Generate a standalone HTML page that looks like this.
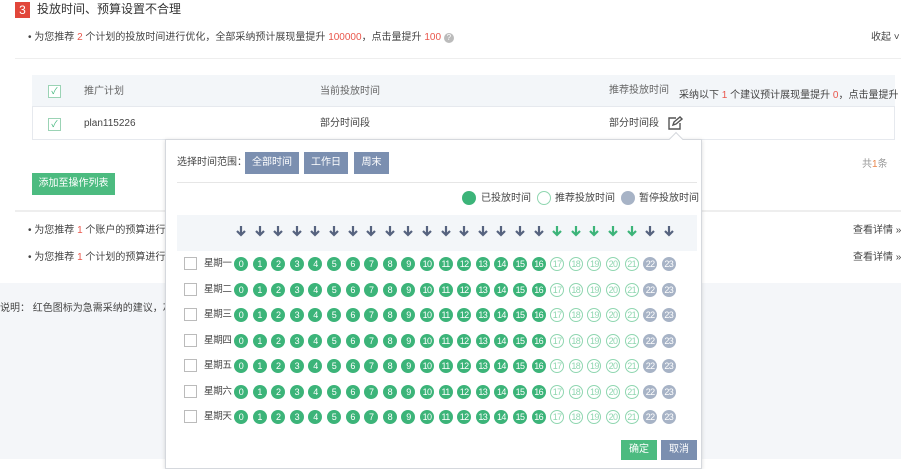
<!DOCTYPE html>
<html><head><meta charset="utf-8"><style>
*{margin:0;padding:0;box-sizing:border-box}
body{width:901px;height:459px;overflow:hidden;background:#fff;font-family:"Liberation Sans","Noto Sans CJK SC",sans-serif;font-size:10px;line-height:13px;color:#444;position:relative}
.a{position:absolute;white-space:nowrap}
.r{color:#e9564b}
.cb{position:absolute;width:13px;height:13px;border:1px solid #9bd3b5;background:#fff;color:#3fb57a;font-size:9px;line-height:11px;text-align:center}
.cb2{position:absolute;width:13px;height:13px;border:1px solid #bbb;background:#fff}
.btn{position:absolute;background:#7b8fb0;color:#fff;text-align:center;line-height:22px;font-size:10px}
.c{position:absolute;width:14px;height:14px;border-radius:50%;font-size:9px;line-height:14px;text-align:center;color:#fff;letter-spacing:-0.6px}
.g{background:#3cb479}
.h{background:#fff;border:1px solid #8fd6b0;color:#8fd6b0;line-height:12px}
.p{background:#a7b3c6}
.ar{position:absolute}
</style></head><body>
<div class="a" style="left:0;top:283px;width:901px;height:176px;background:#f4f6f9"></div>
<div class="a" style="left:15px;top:2px;width:15px;height:16px;background:#e1463a;color:#fff;font-size:12px;text-align:center;line-height:16px">3</div>
<div class="a" style="left:37px;top:1px;font-size:12px;color:#333;line-height:16px">投放时间、预算设置不合理</div>
<div class="a" style="left:28px;top:31px;font-size:10px">• 为您推荐 <span class="r">2</span> 个计划的投放时间进行优化，全部采纳预计展现量提升 <span class="r">100000</span>，点击量提升 <span class="r">100</span> <span style="display:inline-block;width:10px;height:10px;border-radius:50%;background:#bbb;color:#fff;font-size:8px;line-height:10px;text-align:center">?</span></div>
<div class="a" style="left:871px;top:31px;font-size:10px">收起 ˅</div>
<div class="a" style="left:15px;top:58px;width:886px;height:154px;border-top:1px solid #eee;border-bottom:2px solid #eee"></div>
<div class="a" style="left:32px;top:75px;width:863px;height:65px;border:1px solid #e6e9ee"></div>
<div class="a" style="left:32px;top:75px;width:863px;height:32px;background:#f3f6f9;border-bottom:1px solid #e6e9ee"></div>
<div class="cb" style="left:48px;top:85px">✓</div>
<div class="cb" style="left:48px;top:118px">✓</div>
<div class="a" style="left:84px;top:85px;color:#666">推广计划</div>
<div class="a" style="left:320px;top:85px;color:#666">当前投放时间</div>
<div class="a" style="left:609px;top:84px;color:#666">推荐投放时间</div>
<div class="a" style="left:679px;top:89px">采纳以下 <span class="r">1</span> 个建议预计展现量提升 <span class="r">0</span>，点击量提升 <span class="r">0</span></div>
<div class="a" style="left:84px;top:117px">plan115226</div>
<div class="a" style="left:320px;top:117px">部分时间段</div>
<div class="a" style="left:609px;top:117px">部分时间段</div>
<svg class="a" style="left:667px;top:116px" width="16" height="14" viewBox="0 0 16 14"><path d="M9 2H2v11h11V7" fill="none" stroke="#555" stroke-width="1.4"/><path d="M6 9l1-3 6-5 2 2-6 5z" fill="none" stroke="#555" stroke-width="1.4"/></svg>
<div class="btn" style="left:32px;top:173px;width:83px;background:#4cbb80">添加至操作列表</div>
<div class="a" style="left:862px;top:158px;color:#999">共<span style="color:#e9864b">1</span>条</div>
<div class="a" style="left:28px;top:224px">• 为您推荐 <span class="r">1</span> 个账户的预算进行优化</div>
<div class="a" style="left:28px;top:251px">• 为您推荐 <span class="r">1</span> 个计划的预算进行优化</div>
<div class="a" style="left:853px;top:224px">查看详情 »</div>
<div class="a" style="left:853px;top:251px">查看详情 »</div>
<div class="a" style="left:0;top:302px">说明： 红色图标为急需采纳的建议，灰色</div>

<div class="a" style="left:165px;top:139px;width:537px;height:330px;background:#fff;border:1px solid #d5d8dd;box-shadow:0 1px 4px rgba(0,0,0,.15)"></div>
<div class="a" style="left:671px;top:134px;width:10px;height:10px;background:#fff;border-left:1px solid #d5d8dd;border-top:1px solid #d5d8dd;transform:rotate(45deg)"></div>
<div class="a" style="left:177px;top:156px">选择时间范围：</div>
<div class="btn" style="left:245px;top:152px;width:54px">全部时间</div>
<div class="btn" style="left:304px;top:152px;width:44px">工作日</div>
<div class="btn" style="left:354px;top:152px;width:35px">周末</div>
<div class="a" style="left:177px;top:182px;width:520px;height:1px;background:#e6e6e6"></div>
<div class="c g" style="left:462px;top:191px"></div><div class="a" style="left:481px;top:192px">已投放时间</div>
<div class="c h" style="left:537px;top:191px"></div><div class="a" style="left:555px;top:192px">推荐投放时间</div>
<div class="c p" style="left:621px;top:191px"></div><div class="a" style="left:639px;top:192px">暂停投放时间</div>
<div class="a" style="left:177px;top:215px;width:520px;height:36px;background:#f3f6f9"></div>
<div id="grid"></div>
<div class="btn" style="left:621px;top:440px;width:36px;height:20px;line-height:20px;background:#4cbb80">确定</div>
<div class="btn" style="left:661px;top:440px;width:36px;height:20px;line-height:20px">取消</div>
<script>
var days=["星期一","星期二","星期三","星期四","星期五","星期六","星期天"],h="";
for(var i=0;i<24;i++){var x=241+i*18.6,col=(i>=17&&i<=21?'#3cb479':'#56637f');
h+='<svg class="ar" style="left:'+(x-5)+'px;top:225px" width="10" height="12" viewBox="0 0 10 12"><path d="M5 1v9M1 6l4 4 4-4" fill="none" stroke="'+col+'" stroke-width="2.2"/></svg>';}
for(var d=0;d<7;d++){var y=264+d*25.5;
h+='<div class="cb2" style="left:184px;top:'+(y-7)+'px"></div><div class="a" style="left:204px;top:'+(y-7)+'px;font-size:9.5px;letter-spacing:-0.3px">'+days[d]+'</div>';
for(var i=0;i<24;i++){var x=241+i*18.6,c=i<17?'g':(i<22?'h':'p');h+='<div class="c '+c+'" style="left:'+(x-7)+'px;top:'+(y-7)+'px">'+i+'</div>';}}
document.getElementById('grid').innerHTML=h;
</script>
</body></html>
